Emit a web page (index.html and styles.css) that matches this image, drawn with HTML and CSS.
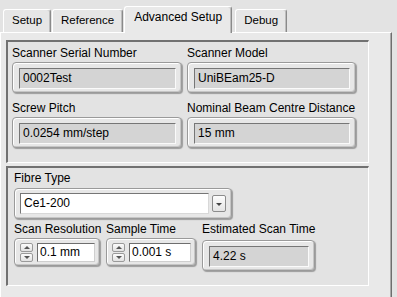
FILE: index.html
```html
<!DOCTYPE html>
<html lang="en">
<head>
    <meta charset="UTF-8">
    <title>Advanced Setup</title>
    <link rel="stylesheet" href="styles.css">
</head>
<body>
    <!-- Tab strip -->
    <div class="tab-bar">
        <div class="tab">Setup</div>
        <div class="tab">Reference</div>
        <div class="tab active">Advanced Setup</div>
        <div class="tab">Debug</div>
    </div>
    <div class="tab-panel">
        <!-- Scanner info (read only) -->
        <div class="group info-group">
            <div class="field">
                <div class="field-label">Scanner Serial Number</div>
                <div class="indicator"><div class="indicator-text">0002Test</div></div>
            </div>
            <div class="field">
                <div class="field-label">Scanner Model</div>
                <div class="indicator"><div class="indicator-text">UniBEam25-D</div></div>
            </div>
            <div class="field">
                <div class="field-label">Screw Pitch</div>
                <div class="indicator"><div class="indicator-text">0.0254 mm/step</div></div>
            </div>
            <div class="field">
                <div class="field-label">Nominal Beam Centre Distance</div>
                <div class="indicator"><div class="indicator-text">15 mm</div></div>
            </div>
        </div>
        <!-- Scan settings -->
        <div class="group scan-group">
            <div class="field">
                <div class="field-label">Fibre Type</div>
                <div class="combo">
                    <div class="combo-text">Ce1-200</div>
                    <div class="combo-btn"></div>
                </div>
            </div>
            <div class="scan-row">
                <div class="field res-field">
                    <div class="field-label">Scan Resolution</div>
                    <div class="numeric">
                        <div class="spinner"><span class="spin-up"></span><span class="spin-down"></span></div>
                        <div class="numeric-text">0.1 mm</div>
                    </div>
                </div>
                <div class="field time-field">
                    <div class="field-label">Sample Time</div>
                    <div class="numeric">
                        <div class="spinner"><span class="spin-up"></span><span class="spin-down"></span></div>
                        <div class="numeric-text">0.001 s</div>
                    </div>
                </div>
                <div class="field est-field">
                    <div class="field-label">Estimated Scan Time</div>
                    <div class="indicator est-indicator"><div class="indicator-text">4.22 s</div></div>
                </div>
            </div>
        </div>
    </div>
</body>
</html>
```

FILE: styles.css
```css
body {
    margin: 0;
    width: 397px;
    height: 297px;
    overflow: hidden;
    background: #e3e3e3;
    font-family: 'Liberation Sans', Arial, sans-serif;
    font-size: 12px;
    line-height: 14px;
    color: #000;
}
/* Tabs */
.tab-bar {
    display: flex;
    align-items: flex-end;
    height: 32px;
    padding-left: 3px;
}
.tab {
    height: 19px;
    padding: 3px 8px 0 8px;
    margin-right: 1px;
    font-size: 11.5px;
    background: #e6e6e6;
    border-top: 1px solid #fff;
    border-left: 1px solid #fff;
    border-right: 1px solid #8a8a8a;
    box-shadow: inset -1px 0 #bdbdbd;
    border-radius: 3px 3px 0 0;
}
.tab.active {
    position: relative;
    z-index: 1;
    height: 23px;
    margin-bottom: -1px;
    margin-right: 3px;
    padding: 3px 9px 0 9px;
    font-size: 12px;
    background: #e9e9e9;
}
.tab-panel {
    height: 257px;
    width: 363px;
    padding: 7px 22px 0 5px;
    background: #e9e9e9;
    border-top: 1px solid #fff;
    border-left: 1px solid #fff;
    border-right: 1px solid #6e6e6e;
    box-shadow: inset -1px 0 #a9a9a9;
}
/* Group boxes */
.group {
    background: #e3e3e3;
    border-top: 2px solid #717171;
    border-left: 2px solid #717171;
    border-right: 1px solid #fff;
    border-bottom: 1px solid #fff;
}
.info-group {
    display: grid;
    grid-template-columns: 170px 169px;
    column-gap: 5px;
    row-gap: 8px;
    height: 102px;
    padding: 4px 0 14px 4px;
    margin-bottom: 3px;
}
.scan-group {
    height: 111px;
    padding: 3px 0 3px 6px;
}
.field {
    display: flex;
    flex-direction: column;
}
.field-label {
    white-space: nowrap;
    margin-bottom: 2px;
}
/* Raised frame with a recessed value */
.indicator {
    height: 21px;
    padding: 5px 5px 3px 6px;
    background: #e7e7e7;
    border: 1px solid #9a9a9a;
    border-radius: 4px;
    box-shadow: inset 1px 1px 0 #fff, inset -1px -1px 0 #c6c6c6, 1px 1px 1px #9c9c9c;
}
.indicator-text {
    height: 19px;
    line-height: 19px;
    padding-left: 3px;
    background: #d4d4d4;
    border: 1px solid;
    border-color: #767676 #fafafa #fafafa #767676;
    white-space: nowrap;
}
/* Combo box */
.scan-group .field-label {
    margin-bottom: 3px;
}
.combo {
    display: flex;
    align-items: center;
    gap: 3px;
    width: 206px;
    height: 21px;
    padding: 4px 5px 4px 5px;
    background: #e7e7e7;
    border: 1px solid #9a9a9a;
    border-radius: 4px;
    box-shadow: inset 1px 1px 0 #fff, inset -1px -1px 0 #c6c6c6, 1px 1px 1px #9c9c9c;
}
.combo-text {
    flex: 1;
    height: 19px;
    line-height: 19px;
    padding-left: 3px;
    background: #fff;
    border: 1px solid;
    border-color: #767676 #d8d8d8 #d8d8d8 #767676;
}
.combo-btn {
    width: 12px;
    height: 15px;
    border: 1px solid #8c8c8c;
    border-radius: 2px;
    background: linear-gradient(#fdfdfd, #e4e4e4);
    display: flex;
    align-items: center;
    justify-content: center;
}
.combo-btn::after {
    content: "";
    border-left: 3px solid transparent;
    border-right: 3px solid transparent;
    border-top: 3px solid #444;
    margin-top: 1px;
}
/* Numeric controls */
.scan-row {
    display: flex;
    gap: 6px;
    margin-top: 3px;
}
.res-field { width: 86px; }
.time-field { width: 90px; }
.est-field { width: 113px; }
.scan-row .field-label {
    margin-bottom: 2px;
}
.numeric {
    display: flex;
    gap: 4px;
    height: 21px;
    padding: 4px 4px 1px 5px;
    background: #e7e7e7;
    border: 1px solid #9a9a9a;
    border-radius: 4px;
    box-shadow: inset 1px 1px 0 #fff, inset -1px -1px 0 #c6c6c6, 1px 1px 1px #9c9c9c;
}
.spinner {
    display: flex;
    flex-direction: column;
    gap: 1px;
    width: 13px;
    height: 19px;
}
.spinner span {
    flex: 1;
    border: 1px solid #9a9a9a;
    border-radius: 2px;
    background: linear-gradient(#fbfbfb, #e2e2e2);
    display: flex;
    align-items: center;
    justify-content: center;
}
.spin-up::after {
    content: "";
    border-left: 3px solid transparent;
    border-right: 3px solid transparent;
    border-bottom: 3px solid #555;
}
.spin-down::after {
    content: "";
    border-left: 3px solid transparent;
    border-right: 3px solid transparent;
    border-top: 3px solid #555;
}
.numeric-text {
    flex: 1;
    height: 17px;
    line-height: 17px;
    padding-left: 2px;
    background: #fff;
    border: 1px solid;
    border-color: #6e6e6e #cfcfcf #cfcfcf #6e6e6e;
    white-space: nowrap;
}
.est-indicator {
    margin-top: 2px;
}
```
